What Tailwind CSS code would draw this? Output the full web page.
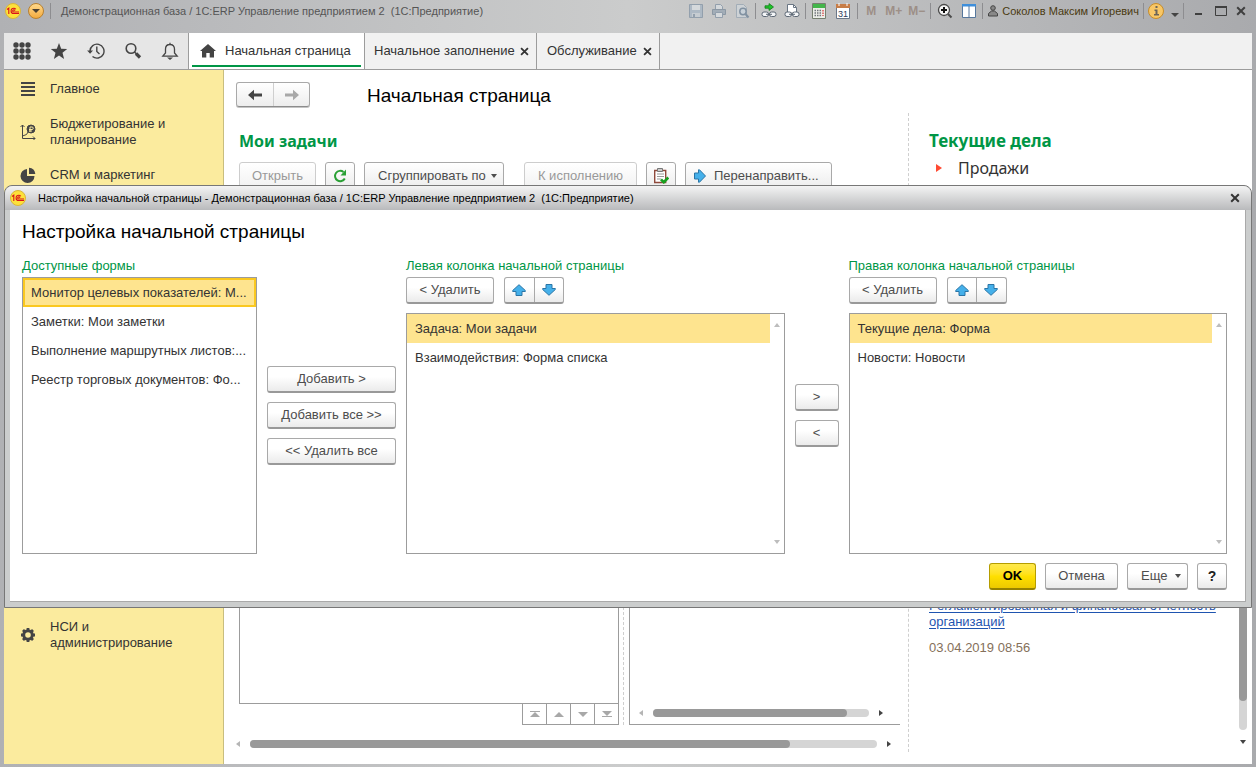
<!DOCTYPE html>
<html lang="ru">
<head>
  <meta charset="UTF-8">
  <meta name="viewport" content="width=device-width, initial-scale=1.0">
  <title>Настройка начальной страницы</title>
  <script src="https://cdn.jsdelivr.net/npm/@tailwindcss/browser@4"></script>
</head>
<body class="relative flex min-h-screen flex-col bg-linear-to-r from-[#b0b1b4] via-[#cbcccc] to-[#a9aaad] px-1 pb-[3px] font-['Liberation_Sans',Arial,sans-serif] text-[13px] leading-4 text-[#333]">

  <!-- Shared icons -->
  <svg class="hidden">
    <symbol id="logo" viewBox="0 0 16 16">
      <circle cx="8" cy="8" r="7.500" fill="#fde13a" stroke="#d9b53a"/>
      <path d="M2 6.500 3.800 5.200V11M10.800 6.200C10.300 5.500 9.600 5.200 8.800 5.200 7.200 5.200 6.100 6.400 6.100 7.900s1.100 2.600 2.500 2.600H14M10 7.600c-.3-.5-.7-.7-1.200-.7-.7 0-1.100.5-1.100 1.100s.5 1 1.100 1H14" fill="none" stroke="#d9121b" stroke-width="1.100"/>
    </symbol>
    <symbol id="arrow-up" viewBox="0 0 14 12">
      <path d="M7 .7 13.300 6.500v1H10v4H4v-4H.7v-1z" fill="#45b0ea" stroke="#2a75a6"/>
    </symbol>
    <symbol id="arrow-down" viewBox="0 0 14 12">
      <path d="M7 11.300.7 5.500v-1H4v-4h6v4h3.300v1z" fill="#45b0ea" stroke="#2a75a6"/>
    </symbol>
    <symbol id="cross" viewBox="0 0 10 10">
      <path d="M1.200 1.200 8.800 8.800M8.800 1.200 1.200 8.800" stroke="currentColor" stroke-width="2"/>
    </symbol>
    <symbol id="tri-up" viewBox="0 0 6 4"><path d="M0 4 3 0l3 4z" fill="currentColor"/></symbol>
    <symbol id="tri-down" viewBox="0 0 6 4"><path d="M0 0h6L3 4z" fill="currentColor"/></symbol>
    <symbol id="tri-left" viewBox="0 0 4 6"><path d="M4 0v6L0 3z" fill="currentColor"/></symbol>
    <symbol id="tri-right" viewBox="0 0 4 6"><path d="M0 0v6l4-3z" fill="currentColor"/></symbol>
  </svg>

  <!-- Window title bar -->
  <header class="flex h-[33px] items-start justify-between pt-[3px] text-xs text-[#4a4a4a]">
    <div class="flex h-4 items-center">
      <svg class="ml-px size-4"><use href="#logo"/></svg>
      <button aria-label="Главное меню" class="ml-[7px] flex size-4 items-center justify-center rounded-full border border-[#b9812f] bg-linear-to-b from-[#ffd98a] to-[#f3ab3c]">
        <svg class="h-1 w-2" viewBox="0 0 8 4"><path d="M0 0h8L4 4z" fill="#4b4030"/></svg>
      </button>
      <span class="ml-1.5 h-4 w-px bg-[#8d8d90]"></span>
      <span class="ml-[10px] text-[11px] whitespace-pre text-[#555]">Демонстрационная база / 1С:ERP Управление предприятием 2  (1С:Предприятие)</span>
    </div>

    <div class="flex h-4 items-center">
      <div class="flex items-center gap-[7px]">
        <button aria-label="Сохранить" class="opacity-60">
          <svg class="size-4" viewBox="0 0 16 16"><path d="M1.500 1.500h13v13h-13z" fill="#9db0c3" stroke="#70859b"/><path d="M4 2h8v5H4z" fill="#dfe5ea"/><path d="M4 10h8v4H4z" fill="#c6cfd8"/><path d="M5 11h2v3H5z" fill="#70859b"/></svg>
        </button>
        <button aria-label="Печать" class="opacity-60">
          <svg class="size-4" viewBox="0 0 16 16"><path d="M4.500 6V1.500h5l2 2V6" fill="#dfe5ea" stroke="#70859b"/><path d="M1.500 6.500h13v5h-13z" fill="#8b9dae" stroke="#667a8d"/><path d="M4.500 9.500h7v5h-7z" fill="#dfe5ea" stroke="#70859b"/></svg>
        </button>
        <button aria-label="Просмотр" class="opacity-60">
          <svg class="size-4" viewBox="0 0 16 16"><path d="M2.500 1.500h7l3 3v10h-10z" fill="#d3dae0" stroke="#8b9dae"/><circle cx="9" cy="8.500" r="3.200" fill="#cbd9e5" stroke="#56708a" stroke-width="1.500"/><path d="m11.500 11 3 3.500" stroke="#56708a" stroke-width="2"/></svg>
        </button>
      </div>
      <span class="mx-[5px] h-4 w-px bg-[#8d8d90]"></span>
      <div class="flex items-center gap-[7px]">
        <button aria-label="Получить ссылку">
          <svg class="size-4" viewBox="0 0 16 16"><path d="M4 2.800h4V.6L12.500 4 8 7.400V5.200H4z" fill="#1fc42b" stroke="#127c19" stroke-width=".8"/><rect x="1" y="9" width="6.500" height="4.500" rx="2" fill="#f4f6f8" stroke="#5d6875"/><rect x="8.500" y="9" width="6.500" height="4.500" rx="2" fill="#f4f6f8" stroke="#5d6875"/><path d="M5 11.300h6" stroke="#5d6875"/></svg>
        </button>
        <button aria-label="Перейти по ссылке">
          <svg class="size-4" viewBox="0 0 16 16"><path d="M3.500 9V1.500h6l3 3V9" fill="#fff" stroke="#6a7684"/><path d="M9.500 1.500v3h3" fill="none" stroke="#6a7684"/><rect x="1" y="9" width="6.500" height="4.500" rx="2" fill="#f4f6f8" stroke="#5d6875"/><rect x="8.500" y="9" width="6.500" height="4.500" rx="2" fill="#f4f6f8" stroke="#5d6875"/><path d="M5 11.300h6" stroke="#5d6875"/></svg>
        </button>
      </div>
      <span class="mx-[5px] h-4 w-px bg-[#8d8d90]"></span>
      <div class="flex items-center gap-2">
        <button aria-label="Калькулятор">
          <svg class="size-4" viewBox="0 0 16 16"><path d="M1.500.5h13v15h-13z" fill="#eceee8" stroke="#75806f"/><path d="M2 1h12v4H2z" fill="#43b64b"/><path d="M3.500 7.500h7M3.500 10h7M3.500 12.500h7" stroke="#70757a" stroke-dasharray="1.500 1" stroke-width="1.500"/><path d="M12 7v6" stroke="#d55" stroke-width="1.500" stroke-dasharray="1.500 1"/></svg>
        </button>
        <button aria-label="Календарь">
          <svg class="size-4" viewBox="0 0 16 16"><path d="M1.500 1.500h13v14h-13z" fill="#fff" stroke="#6b7788"/><path d="M1 1h14v4H1z" fill="#c77d47"/><path d="M4 0v3M12 0v3" stroke="#fff"/><text x="8" y="13.500" font-size="9" text-anchor="middle" fill="#2e3c5c">31</text></svg>
        </button>
      </div>
      <span class="mx-1.5 h-4 w-px bg-[#8d8d90]"></span>
      <div class="flex items-center gap-[7px] text-[#9d8f87]">
        <button class="w-3.5 font-bold">M</button>
        <button class="w-4 font-bold">M+</button>
        <button class="w-4 font-bold">M−</button>
      </div>
      <span class="mx-1.5 h-4 w-px bg-[#8d8d90]"></span>
      <div class="flex items-center gap-2">
        <button aria-label="Масштаб">
          <svg class="size-4" viewBox="0 0 16 16"><circle cx="7" cy="7" r="5.500" fill="#f5f5f5" stroke="#4a4a4a" stroke-width="1.300"/><path d="M4 7h6M7 4v6" stroke="#111" stroke-width="2"/><path d="m11 11 3.500 3.500" stroke="#4a4a4a" stroke-width="2"/></svg>
        </button>
        <button aria-label="Панели">
          <svg class="size-4" viewBox="0 0 16 16"><path d="M1.500 1.500h13v13h-13z" fill="#fff" stroke="#56779c"/><path d="M1 1h14v2.500H1z" fill="#3f8fdb"/><path d="M8 3v12" stroke="#56779c"/></svg>
        </button>
      </div>
      <span class="mx-[5px] h-4 w-px bg-[#8d8d90]"></span>
      <button class="flex items-center gap-1 text-[11px] whitespace-nowrap text-[#4a3a10]">
        <svg class="h-3 w-2.5" viewBox="0 0 10 12"><circle cx="5" cy="3" r="2.300" fill="#888" stroke="#444"/><path d="M.5 11V8.500L3.500 6h3l3 2.500V11z" fill="#888" stroke="#444"/></svg>
        Соколов Максим Игоревич
      </button>
      <span class="mx-1 h-4 w-px bg-[#8d8d90]"></span>
      <button aria-label="Справка">
        <svg class="size-4" viewBox="0 0 16 16"><circle cx="8" cy="8" r="7.500" fill="#f8c766" stroke="#c78d2a"/><path d="M7.500 3h2v2h-2zM6.500 6.500h3v4.500H11v1.500H6V11h1.500V8h-1z" fill="#6b6458"/></svg>
      </button>
      <svg class="mt-2 ml-[7px] h-1 w-2" viewBox="0 0 8 4"><path d="M0 0h8L4 4z" fill="#444"/></svg>
      <span class="mx-1 h-4 w-px bg-[#8d8d90]"></span>
      <button aria-label="Свернуть" class="ml-1"><svg class="size-4" viewBox="0 0 16 16"><path d="M3 11h7" stroke="#3f3f3f" stroke-width="2"/></svg></button>
      <button aria-label="Развернуть" class="ml-1.5"><svg class="size-4" viewBox="0 0 16 16"><path d="M1.500 4.500h11v8h-11z" fill="none" stroke="#3f3f3f"/><path d="M1 4h12" stroke="#3f3f3f" stroke-width="2"/></svg></button>
      <button aria-label="Закрыть" class="mr-1.5 ml-1.5 text-[#3f3f3f]"><svg class="size-2.5"><use href="#cross"/></svg></button>
    </div>
  </header>

  <!-- Tabs -->
  <nav class="flex h-[37px] border-b border-[#9c9c9c] bg-[#f1f1f1]">
    <div class="flex w-[185px] items-center justify-between border-r border-[#9c9c9c] bg-[#e6e6e6] px-[9px] text-[#444]">
      <button aria-label="Меню функций"><svg class="size-[18px]" viewBox="0 0 18 18" fill="currentColor"><circle cx="3" cy="3" r="2.700"/><circle cx="9" cy="3" r="2.700"/><circle cx="15" cy="3" r="2.700"/><circle cx="3" cy="9" r="2.700"/><circle cx="9" cy="9" r="2.700"/><circle cx="15" cy="9" r="2.700"/><circle cx="3" cy="15" r="2.700"/><circle cx="9" cy="15" r="2.700"/><circle cx="15" cy="15" r="2.700"/></svg></button>
      <button aria-label="Избранное"><svg class="size-[18px]" viewBox="0 0 18 18"><path d="m9 1 2.200 5.700 6 .3-4.700 3.800L14.100 17 9 13.500 3.900 17l1.600-6.200L.8 7l6-.3z" fill="currentColor"/></svg></button>
      <button aria-label="История"><svg class="size-[18px]" viewBox="0 0 18 18" fill="none" stroke="currentColor" stroke-width="1.400"><path d="M3 9a7 7 0 1 1 2.500 5.500"/><path d="M9.800 4.500v5l2.700 2.500"/><path d="M.1 8.500h5.900L3.100 11.800z" fill="currentColor" stroke="none"/></svg></button>
      <button aria-label="Поиск"><svg class="size-[18px]" viewBox="0 0 18 18" fill="none" stroke="currentColor"><circle cx="7" cy="6.500" r="4.800" stroke-width="1.600"/><path d="m10.500 10 2 2" stroke-width="1.500"/><path d="m12 11.500 4 4" stroke-width="3.200"/></svg></button>
      <button aria-label="Уведомления"><svg class="size-[18px]" viewBox="0 0 18 18" fill="none" stroke="currentColor" stroke-width="1.300"><path d="M1.800 14.200h14.400L13.500 11V7c0-2.800-1.600-4.500-4.500-4.500S4.500 4.200 4.500 7v4zM9 2.500V.8"/><path d="M6 15.500h6L9 17.900z" fill="currentColor" stroke="none"/></svg></button>
    </div>
    <button class="relative flex w-44 items-center gap-[9px] border-r border-[#9c9c9c] bg-white pl-[11px] whitespace-nowrap after:absolute after:inset-x-[3px] after:bottom-[2px] after:h-0.5 after:bg-[#009646]">
      <svg class="h-3.5 w-4" viewBox="0 0 16 14"><path d="m8 0 8 7h-2v6.500H9.700V9H6.300v4.500H2V7H0z" fill="#444"/></svg>
      Начальная страница
    </button>
    <button class="flex w-[172px] items-center justify-between border-r border-[#9c9c9c] pr-[7px] pl-[9px] whitespace-nowrap">
      Начальное заполнение <svg class="size-[9px]"><use href="#cross"/></svg>
    </button>
    <button class="flex w-[123px] items-center justify-between border-r border-[#9c9c9c] pr-[7px] pl-[10px] whitespace-nowrap">
      Обслуживание <svg class="size-[9px]"><use href="#cross"/></svg>
    </button>
  </nav>

  <div class="flex flex-1">
    <!-- Sections panel -->
    <aside class="flex w-[220px] shrink-0 flex-col border-r border-[#c9be7e] bg-[#fbeb9e] pt-[11px] pb-[113px] pl-4">
      <a href="#" class="flex items-center gap-3.5">
        <svg class="size-4" viewBox="0 0 16 16"><path d="M1 2h14M1 6h14M1 10h14M1 14h14" stroke="#444" stroke-width="2"/></svg>
        Главное
      </a>
      <a href="#" class="mt-[19px] flex items-center gap-3.5">
        <svg class="size-4 shrink-0" viewBox="0 0 16 16" fill="none" stroke="#444"><path d="M2.500 1v13.500H15M.5 3l2-2 2 2M13 12.500l2 2-2 2M2.500 12l4-1.500L8 8"/><circle cx="11" cy="5" r="4" fill="#444"/><path d="M10 8V3h2a1.200 1.200 0 0 1 0 2.500H9M9 7h3" stroke="#fbeb9e"/></svg>
        <span>Бюджетирование и<br>планирование</span>
      </a>
      <a href="#" class="mt-[19px] flex items-center gap-3.5">
        <svg class="size-4" viewBox="0 0 16 16" fill="#444"><path d="M7 2v7h7.500A7 7 0 1 1 7 2z"/><path d="M9 .8A7 7 0 0 1 15.300 7H9z"/></svg>
        CRM и маркетинг
      </a>
      <a href="#" class="mt-auto flex items-center gap-3.5">
        <svg class="size-4 shrink-0" viewBox="0 0 16 16" fill="none" stroke="#444"><circle cx="8" cy="8" r="4.300" stroke-width="3"/><path d="M8 1v3M8 12v3M1 8h3M12 8h3M3 3l2 2M11 11l2 2M13 3l-2 2M5 11l-2 2" stroke-width="2.800"/></svg>
        <span>НСИ и<br>администрирование</span>
      </a>
    </aside>

    <!-- Start page -->
    <main class="flex min-w-0 flex-1 flex-col bg-white pb-3">
      <div class="flex h-[43px] items-start pt-3 pl-3">
        <div class="flex h-[25px] rounded-[3px] border border-[#a9a9a9] border-b-[#8c8c8c] bg-linear-to-b from-white to-[#ededed] shadow-[0_1px_0_#c4c4c4]">
          <button aria-label="Назад" class="flex w-9 items-center justify-center"><svg class="h-3 w-3.5" viewBox="0 0 14 12"><path d="M0 6 6 .7v3.800h8v3H6v3.800z" fill="#444"/></svg></button>
          <button aria-label="Вперед" class="flex w-9 items-center justify-center border-l border-[#cfcfcf]"><svg class="h-3 w-3.5" viewBox="0 0 14 12"><path d="M14 6 8 .7v3.800H0v3h8v3.800z" fill="#a8a8a8"/></svg></button>
        </div>
        <h1 class="ml-[57px] text-[19px] leading-7 text-black">Начальная страница</h1>
      </div>

      <div class="flex flex-1">
        <div class="flex w-[685px] shrink-0 flex-col border-r border-dashed border-[#cfcfcf] pl-[15px]">
          <h2 class="mt-4 font-['Noto_Sans','Open_Sans',sans-serif] text-base leading-6 font-bold text-[#009646]">Мои задачи</h2>
          <div class="mt-[9px] flex whitespace-nowrap text-[#4d4d4d]">
            <button class="h-[27px] w-[77px] rounded-[3px] border border-[#cdcdcd] bg-linear-to-b from-white to-[#f2f2f2] text-[#999]">Открыть</button>
            <button aria-label="Обновить" class="ml-[9px] flex h-[27px] w-[30px] items-center justify-center rounded-[3px] border border-[#a9a9a9] bg-linear-to-b from-white to-[#ededed]">
              <svg class="size-3.5" viewBox="0 0 14 14"><path d="M11.800 9.500A5.200 5.200 0 1 1 10.500 3" fill="none" stroke="#2aa035" stroke-width="2"/><path d="M13 .5v5.900H7.500z" fill="#2aa035"/></svg>
            </button>
            <button class="ml-[9px] flex h-[27px] w-[140px] items-center justify-between rounded-[3px] border border-[#a9a9a9] bg-linear-to-b from-white to-[#ededed] pr-1.5 pl-[13px]">Сгруппировать по <svg class="h-1 w-1.5"><use href="#tri-down"/></svg></button>
            <button class="ml-5 h-[27px] w-[113px] rounded-[3px] border border-[#cdcdcd] bg-linear-to-b from-white to-[#f2f2f2] text-[#999]">К исполнению</button>
            <button aria-label="Выполнено" class="ml-[9px] flex h-[27px] w-[30px] items-center justify-center rounded-[3px] border border-[#a9a9a9] bg-linear-to-b from-white to-[#ededed]">
              <svg class="size-4" viewBox="0 0 16 16"><path d="M1.700 2.500h11v12h-11z" fill="#fff" stroke="#8f4a3c" stroke-width="1.400"/><path d="M4.500.5h5v3h-5z" fill="#ccc" stroke="#777"/><path d="M4 6h7M4 8.500h7M4 11h4" stroke="#999"/><path d="m8 11.500 2.800 2.700L15.300 9.500" fill="none" stroke="#17a11f" stroke-width="2.600"/></svg>
            </button>
            <button class="ml-[9px] flex h-[27px] w-[147px] items-center gap-2 rounded-[3px] border border-[#a9a9a9] bg-linear-to-b from-white to-[#ededed] pl-2">
              <svg class="h-3.5 w-3" viewBox="0 0 12 14"><path d="M.5 4h4V.8h1L11.500 7l-6 6.200h-1V10h-4z" fill="#45b0ea" stroke="#2a75a6"/></svg>
              Перенаправить...
            </button>
          </div>

          <div class="mt-2 flex flex-1">
            <div class="flex w-[380px] flex-col">
              <div class="flex-1 border border-[#9c9c9c]"></div>
              <div class="-mt-px flex h-[22px] divide-x divide-[#9c9c9c] self-end border border-[#9c9c9c] text-[#a8a8a8]">
                <button aria-label="В начало" class="flex w-6 items-center justify-center"><svg class="h-1.5 w-2.5" viewBox="0 0 10 6"><path d="M0 .5h10" stroke="currentColor"/><path d="m5 1 5 5H0z" fill="currentColor"/></svg></button>
                <button aria-label="Вверх" class="flex w-6 items-center justify-center"><svg class="h-[5px] w-2.5" viewBox="0 0 10 5"><path d="m5 0 5 5H0z" fill="currentColor"/></svg></button>
                <button aria-label="Вниз" class="flex w-6 items-center justify-center"><svg class="h-[5px] w-2.5" viewBox="0 0 10 5"><path d="M0 0h10L5 5z" fill="currentColor"/></svg></button>
                <button aria-label="В конец" class="flex w-[23px] items-center justify-center"><svg class="h-1.5 w-2.5" viewBox="0 0 10 6"><path d="M0 5.500h10" stroke="currentColor"/><path d="M0 0h10L5 5z" fill="currentColor"/></svg></button>
              </div>
            </div>
            <div class="mr-[5px] ml-1 border-l border-dashed border-[#cfcfcf]"></div>
            <div class="flex w-[271px] flex-col justify-end border-b border-l border-[#9c9c9c] pb-[7px]">
              <div class="flex items-center pl-[9px]">
                <svg class="h-1.5 w-1 text-[#b5b5b5]"><use href="#tri-left"/></svg>
                <div class="mx-2.5 h-2 w-[216px] rounded-full bg-[#d5d5d5]"><div class="h-2 w-[194px] rounded-full bg-[#999]"></div></div>
                <svg class="h-1.5 w-1 text-[#444]"><use href="#tri-right"/></svg>
              </div>
            </div>
          </div>
          <div class="mt-[15px] mb-1 -ml-[3px] flex items-center">
            <svg class="h-1.5 w-1 text-[#b5b5b5]"><use href="#tri-left"/></svg>
            <div class="mx-2.5 h-2 w-[627px] rounded-full bg-[#d5d5d5]"><div class="h-2 w-[540px] rounded-full bg-[#999]"></div></div>
            <svg class="h-1.5 w-1 text-[#444]"><use href="#tri-right"/></svg>
          </div>
        </div>

        <!-- To-do column -->
        <div class="flex flex-1 justify-between pr-[5px] pl-5">
          <div class="flex flex-col">
            <h2 class="mt-4 font-['Noto_Sans','Open_Sans',sans-serif] text-[17px] leading-6 font-bold text-[#009646]">Текущие дела</h2>
            <a href="#" class="mt-[3px] flex items-center gap-4 pl-[7px] font-['Noto_Sans','Open_Sans',sans-serif] text-base leading-6">
              <svg class="h-2 w-1.5" viewBox="0 0 6 8"><path d="M0 0v8l6-4z" fill="#ff4a32"/></svg>
              Продажи
            </a>
            <a href="#" class="mt-auto w-[290px] text-[#1f55b0] underline underline-offset-2">Регламентированная и финансовая отчетность организаций</a>
            <time class="mt-2.5 mb-24 text-[#85705a]">03.04.2019 08:56</time>
          </div>
          <div class="flex w-2 flex-col items-center pt-24 pb-2">
            <div class="w-2 flex-1 rounded-full bg-[#d5d5d5] pb-[29px]"><div class="h-full rounded-full bg-[#999]"></div></div>
            <svg class="mt-[10px] h-1 w-1.5 text-[#444]"><use href="#tri-down"/></svg>
          </div>
        </div>
      </div>
    </main>
  </div>

  <!-- Settings dialog -->
  <section role="dialog" aria-labelledby="dialog-title" class="absolute inset-x-1 top-[185px] rounded-t-lg border border-[#777] bg-[#cbcdcd] px-[5px] pb-[5px]">
    <div class="-mx-[5px] flex h-6 items-center rounded-t-lg bg-linear-to-b from-[#f4f4f4] to-[#b9babc] pr-[11px] pl-[5px] text-black">
      <svg class="size-4"><use href="#logo"/></svg>
      <span class="ml-3 flex-1 text-[11px] whitespace-pre">Настройка начальной страницы - Демонстрационная база / 1С:ERP Управление предприятием 2  (1С:Предприятие)</span>
      <button aria-label="Закрыть" class="text-[#333]"><svg class="size-2.5"><use href="#cross"/></svg></button>
    </div>

    <div class="border-r border-b border-[#a9a9a9] bg-white pt-2 pr-[18px] pb-[11px] pl-3">
      <h1 id="dialog-title" class="text-[19px] leading-7 text-black">Настройка начальной страницы</h1>

      <div class="mt-3 grid grid-cols-[235px_129px_1fr_44px_1fr] gap-x-2.5 text-[#4d4d4d]">
        <div class="flex flex-col">
          <h2 class="text-[#009646]">Доступные формы</h2>
          <ul role="listbox" aria-label="Доступные формы" class="mt-[3px] h-[277px] border border-[#9c9c9c] leading-[29px] whitespace-nowrap text-[#333]">
            <li role="option" aria-selected="true" class="border-2 border-[#fac820] bg-[#fee48f] pl-1.5 leading-[25px]">Монитор целевых показателей: М...</li>
            <li role="option" class="pl-2">Заметки: Мои заметки</li>
            <li role="option" class="pl-2">Выполнение маршрутных листов:...</li>
            <li role="option" class="pl-2">Реестр торговых документов: Фо...</li>
          </ul>
        </div>

        <div class="flex flex-col justify-center gap-[9px] pt-[19px]">
          <button class="h-[27px] rounded-[3px] border border-[#a9a9a9] border-b-2 border-b-[#999] bg-linear-to-b from-white from-40% to-[#ebebeb]">Добавить &gt;</button>
          <button class="h-[27px] rounded-[3px] border border-[#a9a9a9] border-b-2 border-b-[#999] bg-linear-to-b from-white from-40% to-[#ebebeb]">Добавить все &gt;&gt;</button>
          <button class="h-[27px] rounded-[3px] border border-[#a9a9a9] border-b-2 border-b-[#999] bg-linear-to-b from-white from-40% to-[#ebebeb]">&lt;&lt; Удалить все</button>
        </div>

        <div class="flex flex-col">
          <h2 class="text-[#009646]">Левая колонка начальной страницы</h2>
          <div class="mt-[3px] flex gap-2.5">
            <button class="h-[27px] w-[88px] rounded-[3px] border border-[#a9a9a9] border-b-2 border-b-[#999] bg-linear-to-b from-white from-40% to-[#ebebeb]">&lt; Удалить</button>
            <div class="flex h-[27px] w-[60px] divide-x divide-[#a9a9a9] rounded-[3px] border border-[#a9a9a9] border-b-2 border-b-[#999] bg-linear-to-b from-white from-40% to-[#ebebeb]">
              <button aria-label="Вверх" class="flex flex-1 items-center justify-center"><svg class="h-3 w-3.5"><use href="#arrow-up"/></svg></button>
              <button aria-label="Вниз" class="flex flex-1 items-center justify-center"><svg class="h-3 w-3.5"><use href="#arrow-down"/></svg></button>
            </div>
          </div>
          <div class="mt-[9px] flex flex-1 border border-[#9c9c9c]">
            <ul role="listbox" aria-label="Левая колонка" class="flex-1 leading-[29px] text-[#333]">
              <li role="option" aria-selected="true" class="bg-[#fee48f] pl-2">Задача: Мои задачи</li>
              <li role="option" class="pl-2">Взаимодействия: Форма списка</li>
            </ul>
            <div class="flex w-3.5 flex-col items-center justify-between py-[9px] text-[#bdbdbd]">
              <svg class="h-1 w-1.5"><use href="#tri-up"/></svg>
              <svg class="h-1 w-1.5"><use href="#tri-down"/></svg>
            </div>
          </div>
        </div>

        <div class="flex flex-col justify-center gap-[9px] pt-[19px]">
          <button class="h-[27px] rounded-[3px] border border-[#a9a9a9] border-b-2 border-b-[#999] bg-linear-to-b from-white from-40% to-[#ebebeb]">&gt;</button>
          <button class="h-[27px] rounded-[3px] border border-[#a9a9a9] border-b-2 border-b-[#999] bg-linear-to-b from-white from-40% to-[#ebebeb]">&lt;</button>
        </div>

        <div class="flex flex-col">
          <h2 class="text-[#009646]">Правая колонка начальной страницы</h2>
          <div class="mt-[3px] flex gap-2.5">
            <button class="h-[27px] w-[88px] rounded-[3px] border border-[#a9a9a9] border-b-2 border-b-[#999] bg-linear-to-b from-white from-40% to-[#ebebeb]">&lt; Удалить</button>
            <div class="flex h-[27px] w-[60px] divide-x divide-[#a9a9a9] rounded-[3px] border border-[#a9a9a9] border-b-2 border-b-[#999] bg-linear-to-b from-white from-40% to-[#ebebeb]">
              <button aria-label="Вверх" class="flex flex-1 items-center justify-center"><svg class="h-3 w-3.5"><use href="#arrow-up"/></svg></button>
              <button aria-label="Вниз" class="flex flex-1 items-center justify-center"><svg class="h-3 w-3.5"><use href="#arrow-down"/></svg></button>
            </div>
          </div>
          <div class="mt-[9px] flex flex-1 border border-[#9c9c9c]">
            <ul role="listbox" aria-label="Правая колонка" class="flex-1 leading-[29px] text-[#333]">
              <li role="option" aria-selected="true" class="bg-[#fee48f] pl-2">Текущие дела: Форма</li>
              <li role="option" class="pl-2">Новости: Новости</li>
            </ul>
            <div class="flex w-3.5 flex-col items-center justify-between py-[9px] text-[#bdbdbd]">
              <svg class="h-1 w-1.5"><use href="#tri-up"/></svg>
              <svg class="h-1 w-1.5"><use href="#tri-down"/></svg>
            </div>
          </div>
        </div>
      </div>

      <div class="mt-[9px] flex justify-end gap-[9px] text-[#4d4d4d]">
        <button class="h-[27px] w-[47px] rounded-[3px] border border-[#b59d00] border-b-2 border-b-[#968200] bg-linear-to-b from-[#ffe94a] via-[#ffe000] to-[#ecc900] font-bold text-black">OK</button>
        <button class="h-[27px] w-[73px] rounded-[3px] border border-[#a9a9a9] border-b-2 border-b-[#999] bg-linear-to-b from-white from-40% to-[#ebebeb]">Отмена</button>
        <button class="flex h-[27px] w-[61px] items-center justify-between rounded-[3px] border border-[#a9a9a9] border-b-2 border-b-[#999] bg-linear-to-b from-white from-40% to-[#ebebeb] pr-1.5 pl-[13px]">Еще <svg class="h-1 w-1.5"><use href="#tri-down"/></svg></button>
        <button class="h-[27px] w-[30px] rounded-[3px] border border-[#a9a9a9] border-b-2 border-b-[#999] bg-linear-to-b from-white from-40% to-[#ebebeb] text-sm font-bold text-[#222]">?</button>
      </div>
    </div>
  </section>

</body>
</html>
